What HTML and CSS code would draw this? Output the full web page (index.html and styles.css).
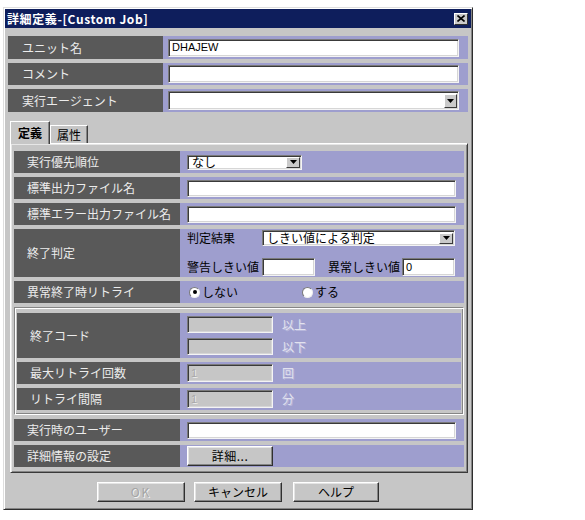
FILE: index.html
```html
<!DOCTYPE html>
<html lang="ja">
<head>
<meta charset="utf-8">
<title>詳細定義-[Custom Job]</title>
<link rel="stylesheet" href="styles.css">
</head>
<body>
<div class="dialog">
  <div class="titlebar">
    <span class="title">詳細定義-[Custom Job]</span>
    <span class="close"><svg width="8" height="7" viewBox="0 0 8 7"><path d="M0.5 0.5 L7.5 6.5 M7.5 0.5 L0.5 6.5" stroke="#000" stroke-width="1.6" fill="none"/></svg></span>
  </div>

  <div class="top">
    <div class="row trow h23">
      <div class="label tlabel">ユニット名</div>
      <div class="field tfield"><div class="input sunken wide text">DHAJEW</div></div>
    </div>
    <div class="row trow h22">
      <div class="label tlabel">コメント</div>
      <div class="field tfield"><div class="input sunken wide"></div></div>
    </div>
    <div class="row trow h23">
      <div class="label tlabel">実行エージェント</div>
      <div class="field tfield">
        <div class="select sunken wide tall">
          <span class="sel-text"></span>
          <span class="arrow"><svg width="7" height="4" viewBox="0 0 7 4"><path d="M0 0 H7 L3.5 4 Z" fill="#000"/></svg></span>
        </div>
      </div>
    </div>
  </div>

  <div class="tabs">
    <div class="tab active">定義</div>
    <div class="tab">属性</div>
  </div>

  <div class="panel">
    <div class="row h22">
      <div class="label plabel">実行優先順位</div>
      <div class="field pfield">
        <div class="select sunken prio">
          <span class="sel-text">なし</span>
          <span class="arrow"><svg width="7" height="4" viewBox="0 0 7 4"><path d="M0 0 H7 L3.5 4 Z" fill="#000"/></svg></span>
        </div>
      </div>
    </div>
    <div class="row h22">
      <div class="label plabel">標準出力ファイル名</div>
      <div class="field pfield"><div class="input sunken pwide"></div></div>
    </div>
    <div class="row h22">
      <div class="label plabel">標準エラー出力ファイル名</div>
      <div class="field pfield"><div class="input sunken pwide"></div></div>
    </div>
    <div class="row h48">
      <div class="label plabel">終了判定</div>
      <div class="field pfield judge">
        <div class="line">
          <span class="cap w75">判定結果</span>
          <div class="select sunken judge-sel">
            <span class="sel-text">しきい値による判定</span>
            <span class="arrow"><svg width="7" height="4" viewBox="0 0 7 4"><path d="M0 0 H7 L3.5 4 Z" fill="#000"/></svg></span>
          </div>
        </div>
        <div class="line">
          <span class="cap w75">警告しきい値</span>
          <div class="input sunken small"></div>
          <span class="cap w74 ml13">異常しきい値</span>
          <div class="input sunken small text">0</div>
        </div>
      </div>
    </div>
    <div class="row h22">
      <div class="label plabel">異常終了時リトライ</div>
      <div class="field pfield radios">
        <span class="radio-item w113"><span class="radio checked"></span>しない</span>
        <span class="radio-item"><span class="radio"></span>する</span>
      </div>
    </div>

    <div class="group">
      <div class="row h45">
        <div class="label glabel">終了コード</div>
        <div class="field gfield codes">
          <div class="line"><div class="input sunken disabled short"></div><span class="unit">以上</span></div>
          <div class="line"><div class="input sunken disabled short"></div><span class="unit">以下</span></div>
        </div>
      </div>
      <div class="row h22">
        <div class="label glabel">最大リトライ回数</div>
        <div class="field gfield">
          <div class="input sunken disabled short tall">1</div><span class="unit">回</span>
        </div>
      </div>
      <div class="row h22">
        <div class="label glabel">リトライ間隔</div>
        <div class="field gfield">
          <div class="input sunken disabled short tall">1</div><span class="unit">分</span>
        </div>
      </div>
    </div>

    <div class="row h22">
      <div class="label plabel">実行時のユーザー</div>
      <div class="field pfield"><div class="input sunken pwide"></div></div>
    </div>
    <div class="row h22">
      <div class="label plabel">詳細情報の設定</div>
      <div class="field pfield"><div class="button detail">詳細...</div></div>
    </div>
  </div>

  <div class="buttons">
    <div class="button dbtn disabled-btn">OK</div>
    <div class="button dbtn">キャンセル</div>
    <div class="button dbtn help">ヘルプ</div>
  </div>
</div>
</body>
</html>
```

FILE: styles.css
```css
* { box-sizing: border-box; }

html, body {
  margin: 0;
  padding: 0;
  background: #ffffff;
}

body {
  font-family: "Noto Sans CJK JP", "Noto Sans", sans-serif;
  font-size: 12px;
  color: #000;
}

.dialog {
  margin: 7px 0 0 3px;
  width: 470px;
  height: 503px;
  background: #c6c6c6;
  border: 1px solid;
  border-color: #dedede #2e2e2e #2e2e2e #dedede;
  box-shadow: inset 1px 1px #ffffff, inset -1px -1px #858585;
  padding: 1px;
  display: flex;
  flex-direction: column;
}

.titlebar {
  height: 19px;
  background: #0e1e5c;
  color: #fff;
  display: flex;
  align-items: center;
  justify-content: space-between;
  padding: 0 3px 0 2px;
}

.title {
  font-weight: bold;
  font-size: 12px;
  line-height: 19px;
  letter-spacing: 0.6px;
}

.close {
  width: 14px;
  height: 12px;
  background: #cacaca;
  border: 1px solid;
  border-color: #fff #303030 #303030 #fff;
  display: flex;
  align-items: center;
  justify-content: center;
}

.top {
  padding: 8px 3px 0 3px;
  display: flex;
  flex-direction: column;
  gap: 4px;
}

.row {
  display: flex;
}

.h22 { height: 22px; }
.h23 { height: 23px; }
.h45 { height: 45px; }
.h48 { height: 48px; }

.label {
  background: #595959;
  color: #ececec;
  display: flex;
  align-items: center;
  line-height: 1;
  white-space: nowrap;
}

.tlabel { width: 155px; padding-left: 14px; }
.plabel { width: 166px; padding-left: 13px; }
.glabel { width: 163px; padding-left: 13px; }

.field {
  flex: 1;
  background: #9e9ece;
  display: flex;
  align-items: center;
}

.tfield { padding: 0 9px 0 5px; }
.pfield { padding: 0 8px 0 7px; }
.gfield { padding: 0 8px 0 7px; }

.sunken {
  background: #ffffff;
  border: 1px solid;
  border-color: #7a7a7a #f4f4f4 #f4f4f4 #7a7a7a;
  box-shadow: inset 1px 1px #3a3a3a, inset -1px -1px #d6d6d6;
}

.input {
  height: 18px;
  display: flex;
  align-items: center;
  padding-left: 3px;
  font-family: "Liberation Sans", sans-serif;
  font-size: 11px;
  line-height: 1;
}

.wide { width: 100%; }
.pwide { width: 100%; height: 17px; }
.small { width: 53px; }
.short { width: 86px; height: 17px; }
.tall { height: 18px; }

.text { color: #000; }

.select {
  display: flex;
  align-items: center;
  justify-content: space-between;
  padding: 0 1px 0 3px;
  line-height: 1;
}

.select.tall { height: 19px; }

.prio { width: 115px; height: 15px; font-size: 12px; }
.judge-sel { width: 193px; height: 16px; font-size: 12px; }

.sel-text {
  white-space: nowrap;
  padding-left: 1px;
}

.arrow {
  width: 14px;
  height: 11px;
  background: #cacaca;
  border: 1px solid;
  border-color: #fff #3a3a3a #3a3a3a #fff;
  display: flex;
  align-items: center;
  justify-content: center;
}

.select.tall .arrow { height: 14px; width: 13px; }

.tabs {
  display: flex;
  align-items: flex-end;
  margin: 9px 0 0 5px;
  height: 22px;
}

.tab {
  background: #c6c6c6;
  border: 1px solid;
  border-bottom: none;
  border-color: #ffffff #404040 #404040 #ffffff;
  box-shadow: inset -1px 0 #858585;
  display: flex;
  align-items: center;
  line-height: 1;
  white-space: nowrap;
}

.tab.active {
  width: 40px;
  height: 23px;
  font-weight: bold;
  padding: 0 0 0 7px;
  position: relative;
  z-index: 2;
  margin-bottom: -1px;
}

.tab:not(.active) {
  width: 38px;
  height: 18px;
  padding: 0 0 0 6px;
}

.panel {
  margin: 0 3px 0 5px;
  height: 330px;
  border: 1px solid;
  border-color: #ffffff #3a3a3a #3a3a3a #ffffff;
  box-shadow: inset 1px 1px #e6e6e6, inset -1px -1px #858585;
  padding: 7px 3px 4px 3px;
  display: flex;
  flex-direction: column;
  gap: 4px;
}

.judge {
  flex-direction: column;
  align-items: stretch;
  justify-content: space-between;
  padding-top: 1px;
  padding-bottom: 1px;
}

.line {
  display: flex;
  align-items: center;
}

.cap { white-space: nowrap; line-height: 1; color: #000; }
.w75 { width: 75px; }
.w74 { width: 74px; }
.ml13 { margin-left: 13px; }

.radios { padding-left: 9px; }

.radio-item {
  display: flex;
  align-items: center;
  line-height: 1;
}

.w113 { width: 113px; }

.radio {
  width: 11px;
  height: 11px;
  border-radius: 50%;
  background: #ffffff;
  border: 1px solid;
  border-color: #7a7a7a #f0f0f0 #f0f0f0 #7a7a7a;
  margin-right: 2px;
  display: flex;
  align-items: center;
  justify-content: center;
}

.radio.checked::after {
  content: "";
  width: 4px;
  height: 4px;
  border-radius: 50%;
  background: #000;
}

.group {
  height: 108px;
  border: 1px solid;
  border-color: #858585 #ffffff #ffffff #858585;
  box-shadow: inset 1px 1px #ffffff, inset -1px -1px #858585;
  padding: 5px 2px 4px 2px;
  display: flex;
  flex-direction: column;
  gap: 4px;
}

.codes {
  flex-direction: column;
  align-items: flex-start;
  justify-content: center;
  gap: 5px;
}

.disabled {
  background: #c6c6c6;
  color: #a8a8a8;
  text-shadow: 1px 1px #ececec;
}

.unit {
  margin-left: 9px;
  color: #e2e2ee;
  text-shadow: 1px 1px #b8b8dc;
  line-height: 1;
}

.button {
  background: #c6c6c6;
  border: 1px solid;
  border-color: #ffffff #303030 #303030 #ffffff;
  box-shadow: inset -1px -1px #858585, inset 1px 1px #e4e4e4;
  display: flex;
  align-items: center;
  justify-content: center;
  line-height: 1;
}

.detail {
  width: 86px;
  height: 20px;
  letter-spacing: 0.5px;
}

.buttons {
  display: flex;
  gap: 9px;
  margin: 9px 0 0 92px;
}

.dbtn {
  width: 88px;
  height: 20px;
}

.help { width: 86px; margin-left: 2px; }

.disabled-btn {
  color: #a4a4a4;
  text-shadow: 1px 1px #f2f2f2;
  letter-spacing: 2px;
}
```
